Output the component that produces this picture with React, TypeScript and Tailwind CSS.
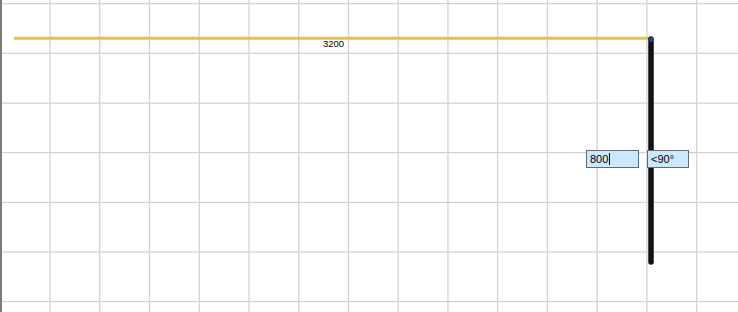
import React from "react";

const STEP_X = 49.74;
const STEP_Y = 49.67;

const vLines = Array.from({ length: 15 }, (_, i) => 50 + (i - 1) * STEP_X);
const hLines = Array.from({ length: 7 }, (_, i) => 3.7 + i * STEP_Y);

export default function App() {
  return (
    <div className="relative w-[738px] h-[312px] overflow-hidden bg-white font-['Liberation_Sans',Arial,sans-serif]">
      {/* Drawing canvas */}
      <svg className="absolute inset-0" width={738} height={312} viewBox="0 0 738 312">
        {vLines.map((x) => (
          <line key={`v${x}`} x1={x} y1={0} x2={x} y2={312} stroke="#d2d2d2" strokeWidth={1.3} />
        ))}
        {hLines.map((y) => (
          <line key={`h${y}`} x1={0} y1={y} x2={738} y2={y} stroke="#d2d2d2" strokeWidth={1.3} />
        ))}
        <rect x={0} y={0} width={2} height={312} fill="#7b7b7b" />
        <line x1={14} y1={38.3} x2={650} y2={38.3} stroke="#e8bf48" strokeWidth={3} />
        <line x1={651} y1={39} x2={651} y2={262} stroke="#111111" strokeWidth={5.5} strokeLinecap="round" />
        <circle cx={651} cy={39.5} r={2.6} fill="#1f3f8f" />
      </svg>

      {/* Dimension label */}
      <span className="absolute left-[323px] top-[38px] text-[9.5px] leading-[12px] text-black">3200</span>

      {/* Length input */}
      <div className="absolute left-[586px] top-[150px] w-[53px] h-[18px] border border-[#5f6b75] bg-[#cce8ff] flex items-center pl-[3px] text-[11px] text-black">
        800
        <span className="w-px h-[12px] bg-black ml-[1px]" />
      </div>

      {/* Angle input */}
      <div className="absolute left-[647px] top-[150px] w-[42px] h-[18px] border border-[#5f6b75] bg-[#cce8ff] flex items-center pl-[3px] text-[11px] text-black">
        &lt;90°
      </div>
    </div>
  );
}
